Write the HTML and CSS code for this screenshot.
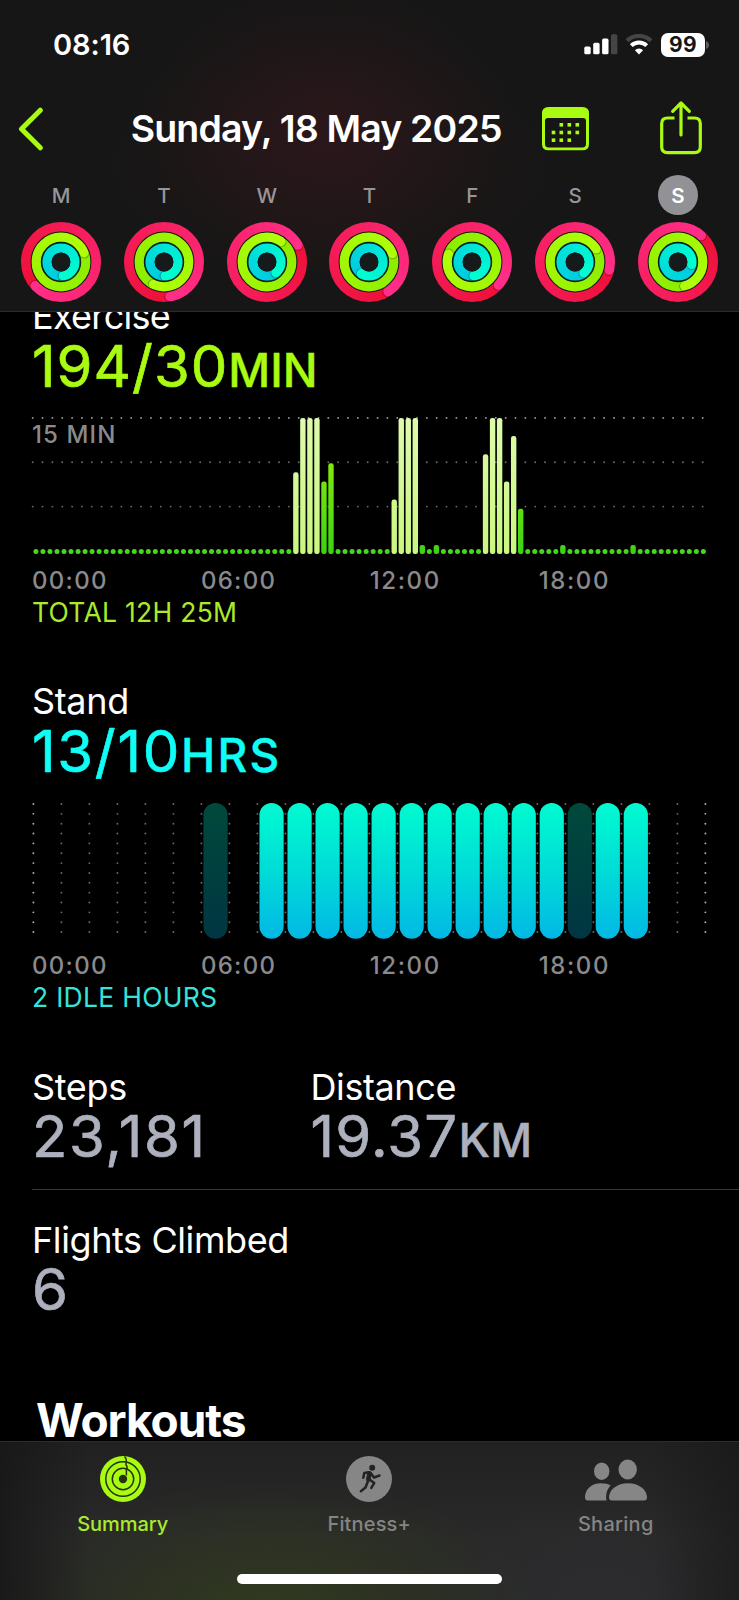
FILE: index.html
```html
<!DOCTYPE html>
<html lang="en">
<head>
<meta charset="utf-8">
<title>Fitness – Sunday, 18 May 2025</title>
<link rel="stylesheet" href="styles.css">
</head>
<body>
<div class="screen">
  <header class="header">
    <div class="status">
      <span class="clock">08:16</span>
      <div class="status-icons">
        <svg class="signal" width="34" height="21" viewBox="0 0 34 21">
          <rect x="0.3" y="12.6" width="6.4" height="7.7" rx="1.6" fill="#fff"/>
          <rect x="9.2" y="8.8" width="6.4" height="11.5" rx="1.6" fill="#fff"/>
          <rect x="18.1" y="4.6" width="6.4" height="15.7" rx="1.6" fill="#fff"/>
          <rect x="27" y="0.3" width="6.4" height="20" rx="1.6" fill="#454545"/>
        </svg>
        <svg class="wifi" width="28" height="21" viewBox="0 0 28 21">
          <path d="M2 6.8A17.2 17.2 0 0 1 26 6.8" fill="none" stroke="#454545" stroke-width="4.2"/>
          <path d="M6.3 11.6A11 11 0 0 1 21.7 11.6" fill="none" stroke="#fff" stroke-width="4"/>
          <path d="M14 20.6 9.9 16.3A5.8 5.8 0 0 1 18.1 16.3Z" fill="#fff"/>
        </svg>
        <div class="battery"><span class="battery-level">99</span></div>
        <svg class="battery-nub" width="3" height="8" viewBox="0 0 3 8"><path d="M0 0Q3 1 3 4T0 8Z" fill="#5c5c5c"/></svg>
      </div>
    </div>
    <div class="nav">
      <svg class="back" width="28" height="44" viewBox="0 0 28 44"><path d="M24.300 3.200 5.500 22 24.300 40.800" fill="none" stroke="#a9fb11" stroke-width="5" stroke-linecap="round" stroke-linejoin="round"/></svg>
      <h1 class="title">Sunday, 18 May 2025</h1>
      <svg class="calendar" width="47" height="44" viewBox="0 0 47 44">
        <path fill="#a9fb11" fill-rule="evenodd" d="M6.500 0H40.500Q47 0 47 6.500V37Q47 43.300 40.500 43.300H6.500Q0 43.300 0 37V6.500Q0 0 6.500 0ZM6 11Q3 11 3 14V37Q3 40.400 6.500 40.400H40.500Q44 40.400 44 37V14Q44 11 41 11Z"/>
        <g fill="#a9fb11">
          <rect x="17.500" y="16" width="3.600" height="3.600"/><rect x="25.500" y="16" width="3.600" height="3.600"/><rect x="33.500" y="16" width="3.600" height="3.600"/>
          <rect x="9.700" y="23.700" width="3.600" height="3.600"/><rect x="17.500" y="23.700" width="3.600" height="3.600"/><rect x="25.500" y="23.700" width="3.600" height="3.600"/><rect x="33.500" y="23.700" width="3.600" height="3.600"/>
          <rect x="9.700" y="31.400" width="3.600" height="3.600"/><rect x="17.500" y="31.400" width="3.600" height="3.600"/><rect x="25.500" y="31.400" width="3.600" height="3.600"/>
        </g>
      </svg>
      <svg class="share" width="42" height="54" viewBox="0 0 42 54">
        <g fill="none" stroke="#a9fb11" stroke-width="3.200" stroke-linecap="round" stroke-linejoin="round">
          <path d="M14.500 17H7.500Q1.700 17 1.700 22.500V46Q1.700 51.700 7.500 51.700H34.500Q40.300 51.700 40.300 46V22.500Q40.300 17 34.500 17H27.500" stroke-linecap="butt"/>
          <path d="M21 2.500V34M12.700 10.300 21 2 29.300 10.300"/>
        </g>
      </svg>
    </div>
    <div class="week" id="week"></div>
  </header>

  <main class="content">
    <section class="metric">
      <h2 class="label tight">Exercise</h2>
      <div class="value move"><span class="num tight">194/30</span><span class="unit">MIN</span></div>
      <div class="chart">
        <svg id="exercise-chart" width="739" height="170" viewBox="0 0 739 170"></svg>
        <span class="chart-cap">15 MIN</span>
      </div>
      <div class="axis"><span>00:00</span><span>06:00</span><span class="one">12:00</span><span class="one">18:00</span></div>
      <p class="note note-move">TOTAL 12H 25M</p>
    </section>
    <section class="metric">
      <h2 class="label">Stand</h2>
      <div class="value stand"><span class="num wide">13/10</span><span class="unit wide">HRS</span></div>
      <div class="chart"><svg id="stand-chart" width="739" height="170" viewBox="0 0 739 170"></svg></div>
      <div class="axis"><span>00:00</span><span>06:00</span><span class="one">12:00</span><span class="one">18:00</span></div>
      <p class="note note-stand">2 IDLE HOURS</p>
    </section>
    <section class="pair">
      <div class="stat">
        <h2 class="label">Steps</h2>
        <div class="value grey"><span class="num wide">23,181</span></div>
      </div>
      <div class="stat">
        <h2 class="label loose">Distance</h2>
        <div class="value grey"><span class="num">19.37</span><span class="unit">KM</span></div>
      </div>
    </section>
    <section class="flights">
      <h2 class="label loose">Flights Climbed</h2>
      <div class="value grey"><span class="num">6</span></div>
    </section>
    <h2 class="workouts">Workouts</h2>
  </main>

  <footer class="tabbar">
    <div class="tabs">
      <div class="tab active">
        <svg width="46" height="46" viewBox="0 0 46 46">
          <circle cx="23" cy="23" r="23" fill="#a9fb11"/>
          <g fill="none" stroke="#26310f" stroke-width="1.500">
            <circle cx="23" cy="23" r="17.200"/><circle cx="23" cy="23" r="10.700"/>
            <path d="M24.500 0.500Q27 3 26 5.800V9Q28 11 26.400 13V19.500"/>
          </g>
          <circle cx="23" cy="23" r="4.200" fill="#26310f"/>
        </svg>
        <span>Summary</span>
      </div>
      <div class="tab">
        <svg width="46" height="46" viewBox="0 0 46 46">
          <circle cx="23" cy="23" r="23" fill="#868686"/>
          <circle cx="26.200" cy="11.700" r="3" fill="#232323"/>
          <g fill="none" stroke="#232323" stroke-linecap="round" stroke-linejoin="round">
            <path d="M23.500 17.300 22.300 23.500" stroke-width="4.600"/>
            <path d="M24.700 17 28 21.500 33.500 19.500M22.700 16.300 18.300 17 17.300 21.700M22.200 24.500 19.500 31.500 14.900 35.200M23.500 23.500 28.300 26.900 25.300 31.900" stroke-width="2.500"/>
          </g>
        </svg>
        <span class="plus">Fitness+</span>
      </div>
      <div class="tab">
        <svg width="62" height="46" viewBox="0 -3.500 62 46" fill="#868686">
          <ellipse cx="42.700" cy="10" rx="9.200" ry="10"/>
          <ellipse cx="16.700" cy="11.700" rx="7.700" ry="8.700"/>
          <path d="M24 38C24 30 32 23.700 43 23.700S62 30 62 38Q62 41 59 41H27Q24 41 24 38Z"/>
          <path d="M0 38C0 30 6 23.700 16 23.700 20 23.700 23 24.400 25.700 25.900 22 29.500 20.500 34.500 21.500 41H3Q0 41 0 38Z"/>
        </svg>
        <span class="sharing">Sharing</span>
      </div>
    </div>
    <div class="home"></div>
  </footer>
</div>
<script src="charts.js"></script>
</body>
</html>
```

FILE: styles.css
```css
* { box-sizing: border-box; margin: 0; padding: 0; }
body { background: #000; font-family: Inter, "Liberation Sans", sans-serif; color: #fff; }
svg { display: block; flex: none; }

.screen { width: 739px; height: 1600px; overflow: hidden; display: flex; flex-direction: column; background: #000; }

.header {
  height: 312px; flex: none; border-bottom: 1px solid #2b2b2b;
  background:
    radial-gradient(190px 150px at 325px 125px, rgba(56, 24, 30, .5), rgba(56, 24, 30, 0)),
    radial-gradient(260px 130px at 330px 165px, rgba(44, 22, 25, .4), rgba(44, 22, 25, 0)),
    #161616;
}

.status { height: 88px; display: flex; align-items: center; justify-content: space-between; padding: 1px 30px 0 53px; }
.clock { font-size: 29px; font-weight: 600; letter-spacing: -.100px; line-height: 36px; }
.status-icons { display: flex; align-items: center; }
.signal { margin-right: -1px; }
.wifi { margin: 0 8px 0 8px; }
.battery { width: 44px; height: 24px; border-radius: 7px; background: #fff; display: flex; align-items: center; justify-content: center; }
.battery-level { color: #161616; font-size: 21px; line-height: 24px; font-weight: 700; letter-spacing: .36px; padding-top: 1px; }
.battery-nub { margin-left: 1px; }

.nav { height: 82px; display: flex; align-items: center; padding: 0 37px 0 16px; }
.title { margin-left: 86.700px; font-size: 37.5px; font-weight: 600; letter-spacing: -.85px; line-height: 48px; white-space: nowrap; width: 411.300px; }
.share { margin: -3px 0 0 71.500px; }

.week { display: grid; grid-template-columns: repeat(7, 102.800px); padding: 5px 0 0 9.700px; }
.day { display: flex; flex-direction: column; align-items: center; gap: 7px; }
.day-name { width: 40px; height: 40px; line-height: 42px; border-radius: 50%; text-align: center; font-size: 20.500px; font-weight: 500; color: #989598; }
.day-name.selected { background: #929196; color: #fff; font-weight: 600; }

.content { height: 1129px; flex: none; overflow: hidden; padding-left: 32px; }
.metric { height: 333px; margin-bottom: 52px; }
.metric:first-child { margin-top: -17.500px; }
.label { font-size: 36px; font-weight: 400; line-height: 42px; letter-spacing: -.350px; white-space: nowrap; }
.label.tight { letter-spacing: -.700px; }
.label.loose { letter-spacing: -.400px; }
.value { height: 58px; line-height: 58px; white-space: nowrap; stroke-linejoin: round; }
.num { font-size: 58px; font-weight: 400; letter-spacing: 1.200px; -webkit-text-stroke: .7px currentColor; }
.num.tight { letter-spacing: 1px; }
.num.wide { letter-spacing: 1.700px; }
.unit { font-size: 46px; font-weight: 500; letter-spacing: .300px; -webkit-text-stroke: .4px currentColor; }
.num.tight + .unit { letter-spacing: 0; }
.unit.wide { letter-spacing: 2.200px; }
.move { color: #a9fb11; }
.stand { color: #0ffdf5; }
.grey { color: #adb0bd; }

.chart { position: relative; height: 170px; margin-left: -32px; }
.chart-cap { position: absolute; left: 32px; top: 24.500px; font-size: 24px; line-height: 32px; font-weight: 500; letter-spacing: 1.100px; color: #8a8a8d; }
.axis { height: 32px; display: grid; grid-template-columns: repeat(4, 168.900px); font-size: 24px; line-height: 32px; font-weight: 500; letter-spacing: 1.300px; color: #8a8a8d; }
.axis .one { letter-spacing: 1.600px; }
.note { font-size: 26.500px; line-height: 31px; font-weight: 400; letter-spacing: .280px; }
.note-move { color: #a9ea2b; }
.note-stand { color: #37e3d9; }

.pair { display: grid; grid-template-columns: 278.500px 1fr; height: 124px; margin-top: 53px; border-bottom: 1px solid #38383a; }
.pair .value, .flights .value { height: 56px; line-height: 56px; }
.flights { height: 98px; margin-top: 29.500px; }
.pair .stat { height: 123px; }
.workouts { margin: 75.500px 0 0 4px; font-size: 46px; line-height: 54px; font-weight: 700; letter-spacing: -1.050px; }

.tabbar {
  height: 159px; flex: none; border-top: 1px solid #2c2c2c;
  background:
    linear-gradient(90deg, rgba(22, 22, 22, .8), rgba(22, 22, 22, 0) 90px, rgba(22, 22, 22, 0) 650px, rgba(22, 22, 22, .6)),
    radial-gradient(270px 130px at 270px 170px, rgba(50, 60, 30, .9), rgba(50, 60, 30, 0)),
    radial-gradient(200px 110px at 600px 170px, rgba(48, 48, 54, .7), rgba(48, 48, 54, 0)),
    linear-gradient(#212121, #292929 60%, #272727);
}
.tabs { display: grid; grid-template-columns: repeat(3, 246.500px); height: 132px; margin-left: -.500px; }
.tab { display: flex; flex-direction: column; align-items: center; padding-top: 13.500px; gap: 9px; font-size: 20px; line-height: 26px; font-weight: 500; letter-spacing: -.050px; color: #858585; }
.tab .plus { letter-spacing: .150px; }
.tab .sharing { letter-spacing: .270px; }
.tab.active { color: #a9ea2b; }
.home { width: 265px; height: 10px; margin: 0 auto; border-radius: 5px; background: #fff; }
```

FILE: charts.js
```js
const NS = 'http://www.w3.org/2000/svg';
function add(parent, tag, attrs) {
  const el = document.createElementNS(NS, tag);
  for (const k in attrs) el.setAttribute(k, attrs[k]);
  parent.appendChild(el);
  return el;
}

// Activity rings: end angles in degrees, clockwise from the top.
const days = [
  ['M', 235, 79, 190], ['T', 178, 216, 194], ['W', 69, 45, 159], ['T', 155, 81, 232],
  ['F', 139, 299, 191], ['S', 111, 69, 160], ['S', 49, 175, 119]
];
const rings = [
  { r: 35.2, w: 9.6, from: [238, 16, 56], to: [255, 46, 136] },
  { r: 24.8, w: 9.2, from: [140, 236, 0], to: [176, 255, 10] },
  { r: 14, w: 9.2, from: [0, 200, 226], to: [0, 255, 208] }
];
const point = (r, deg) => {
  const a = (deg - 90) * Math.PI / 180;
  return [40 + r * Math.cos(a), 40 + r * Math.sin(a)];
};
const mix = (a, b, t) => `rgb(${a.map((v, i) => Math.round(v + (b[i] - v) * t)).join(',')})`;
// The band keeps its edges crisp through a mask; the sweep inside it is drawn wider.
function drawRing(svg, ring, tip, id) {
  const { r, w } = ring;
  const mask = add(svg, 'mask', { id, maskUnits: 'userSpaceOnUse', x: 0, y: 0, width: 80, height: 80 });
  add(mask, 'circle', { cx: 40, cy: 40, r, fill: 'none', stroke: '#fff', 'stroke-width': w });
  const band = add(svg, 'g', { mask: `url(#${id})` });
  const end = tip - (w / 2 / r) * 180 / Math.PI;
  const step = 4;
  for (let i = 0; i < 360; i += step) {
    const [x1, y1] = point(r, end + i);
    const [x2, y2] = point(r, end + Math.min(i + 40, 361));
    add(band, 'path', {
      d: `M${x1} ${y1}A${r} ${r} 0 0 1 ${x2} ${y2}`, fill: 'none',
      stroke: mix(ring.from, ring.to, (i + step) / 360), 'stroke-width': w + 2
    });
  }
  const [sx, sy] = point(r, end + 65 / r);
  add(band, 'circle', { cx: sx, cy: sy, r: w / 2, fill: 'rgba(0,0,0,.26)' });
  const [cx, cy] = point(r, end);
  const [ax, ay] = point(r, end - 24);
  add(band, 'path', { d: `M${ax} ${ay}A${r} ${r} 0 0 1 ${cx} ${cy}`, fill: 'none', stroke: mix(ring.from, ring.to, 0.98), 'stroke-width': w + 2 });
  add(band, 'circle', { cx, cy, r: w / 2, fill: mix(ring.from, ring.to, 1) });
}
const week = document.getElementById('week');
days.forEach(([name, ...ends], i) => {
  const day = document.createElement('div');
  day.className = 'day';
  const label = document.createElement('span');
  label.className = i === 6 ? 'day-name selected' : 'day-name';
  label.textContent = name;
  day.appendChild(label);
  const svg = add(day, 'svg', { width: 80, height: 80, viewBox: '0 0 80 80' });
  add(svg, 'circle', { cx: 40, cy: 40, r: 31, fill: '#14180a' });
  add(svg, 'circle', { cx: 40, cy: 40, r: 20.8, fill: '#04201a' });
  rings.forEach((ring, k) => drawRing(svg, ring, ends[k], `ring-${i}-${k}`));
  add(svg, 'circle', { cx: 40, cy: 40, r: 9.4, fill: '#161a1b' });
  week.appendChild(day);
});

// Exercise: minutes in each quarter hour, 15 at most.
const ex = document.getElementById('exercise-chart');
const defs = add(ex, 'defs', {});
function gradient(id, y1, y2, c1, c2) {
  const g = add(defs, 'linearGradient', { id, gradientUnits: 'userSpaceOnUse', x1: 0, x2: 0, y1, y2 });
  add(g, 'stop', { offset: 0, 'stop-color': c1 });
  add(g, 'stop', { offset: 1, 'stop-color': c2 });
}
gradient('workout', 22, 159, '#defbac', '#c9f77f');
gradient('plain', 22, 159, '#a6f40c', '#3bd312');
[22.9, 67.2, 111.6].forEach((y, row) => {
  for (let i = 0; i < 69; i++) {
    add(ex, 'circle', { cx: 32.7 + i * 9.853, cy: y, r: 0.95, fill: row ? '#6a6a6c' : '#a0a0a2' });
  }
});
const workout = { 37: 9, 38: 15, 39: 15, 40: 15, 51: 6, 52: 15, 53: 15, 54: 15, 64: 11, 65: 15, 66: 15, 67: 8, 68: 13 };
const plain = { 41: 8, 42: 10, 55: 1, 57: 1, 69: 5, 75: 1, 85: 1 };
for (let i = 0; i < 96; i++) {
  const x = 35.9 + i * 7.026;
  const minutes = workout[i] || plain[i] || 0;
  if (!minutes) {
    add(ex, 'circle', { cx: x, cy: 156.4, r: 2.5, fill: '#45d81c' });
    continue;
  }
  const h = minutes * 9.07;
  add(ex, 'rect', { x: x - 2.7, y: 159 - h, width: 5.4, height: h, rx: 2.3, fill: workout[i] ? 'url(#workout)' : 'url(#plain)' });
}

// Stand: one capsule for each hour, dimmed when idle.
const st = document.getElementById('stand-chart');
const sd = add(st, 'defs', {});
const g = add(sd, 'linearGradient', { id: 'hour', x1: 0, x2: 0, y1: 0, y2: 1 });
[[0, '#00fbd0'], [0.5, '#00dcd8'], [1, '#02b8e4']].forEach(([o, c]) => add(g, 'stop', { offset: o, 'stop-color': c }));
for (let c = 0; c <= 24; c++) {
  for (let k = 0; k < 14; k++) {
    add(st, 'circle', { cx: 33.4 + c * 28, cy: 24 + k * 9.85, r: 0.95, fill: c % 24 ? '#69696b' : '#b0b0b2' });
  }
}
const idle = [6, 19];
[6, 8, 9, 10, 11, 12, 13, 14, 15, 16, 17, 18, 19, 20, 21].forEach(h => {
  const dim = idle.includes(h);
  add(st, 'rect', { x: 35.3 + h * 28.02, y: 23, width: 24.2, height: 135.7, rx: 12.1, fill: 'url(#hour)', 'fill-opacity': dim ? 0.29 : 1 });
});
```
